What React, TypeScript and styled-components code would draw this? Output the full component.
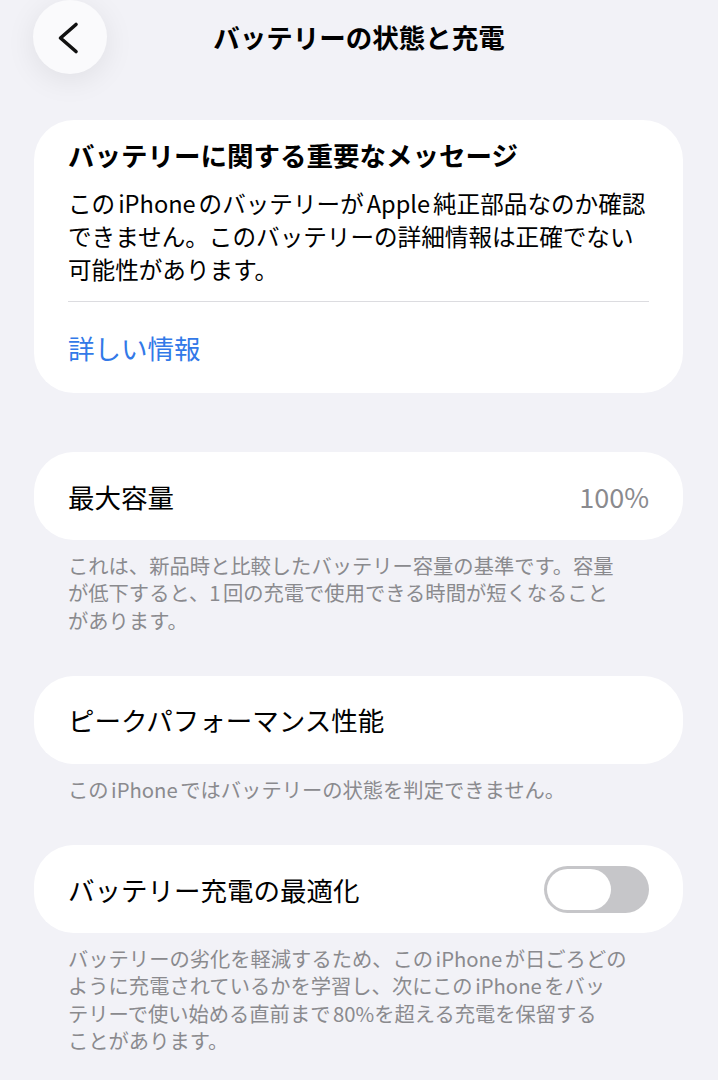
import React from 'react';
import styled, { createGlobalStyle } from 'styled-components';

const GlobalStyle = createGlobalStyle`
	html, body {
		margin: 0;
		padding: 0;
		background: #f2f2f7;
	}
	body {
		font-family: 'Noto Sans CJK JP', 'Noto Sans', sans-serif;
		-webkit-font-smoothing: antialiased;
		text-autospace: normal;
	}
`;

const Page = styled.div`
	min-height: 100vh;
	background: #f2f2f7;
	padding-bottom: 30px;
`;

const Header = styled.header`
	display: grid;
	grid-template-columns: 1fr auto 1fr;
	align-items: center;
	height: 74px;
`;

const BackButton = styled.button`
	width: 74px;
	height: 74px;
	margin-left: 33px;
	border: none;
	border-radius: 50%;
	background: #fafafc;
	box-shadow: 0 6px 30px rgba(0, 0, 0, 0.08);
	display: flex;
	align-items: center;
	justify-content: center;
	padding: 0;
	cursor: pointer;
`;

const Title = styled.h1`
	margin: 0;
	font-size: 26.5px;
	font-weight: 700;
	color: #000;
	line-height: 34px;
`;

const Content = styled.main`
	padding: 0 35px 0 34px;
	margin-top: 46px;
`;

const Card = styled.section<{ $gap?: number }>`
	background: #fff;
	border-radius: 40px;
	margin-top: ${(p) => p.$gap ?? 0}px;
`;

const NoticeBody = styled.div`
	padding: 18px 34px 0;
`;

const NoticeHeading = styled.h2`
	margin: 0;
	font-size: 26.5px;
	font-weight: 700;
	line-height: 34px;
	color: #000;
`;

const NoticeText = styled.p`
	margin: 15px 0 15px;
	font-size: 23.6px;
	line-height: 33px;
	color: #000;
	white-space: nowrap;
`;

const Divider = styled.hr`
	margin: 0 34px;
	border: none;
	height: 1px;
	background: #dcdce0;
`;

const LinkRow = styled.a`
	display: flex;
	align-items: center;
	height: 91px;
	padding: 0 34px;
	font-size: 26.5px;
	color: #3279e8;
	text-decoration: none;
`;

const Row = styled.div`
	display: flex;
	align-items: center;
	justify-content: space-between;
	height: 88px;
	padding: 0 34px;
	border-radius: 44px;
	background: #fff;
`;

const RowLabel = styled.span`
	font-size: 26.5px;
	color: #000;
`;

const RowValue = styled.span`
	font-size: 27px;
	color: #8a8a8e;
`;

const Footnote = styled.p`
	margin: 0;
	padding: 12px 34px 0;
	font-size: 20.3px;
	line-height: 27.3px;
	color: #8a8a8e;
	white-space: nowrap;
`;

const Toggle = styled.span<{ $on?: boolean }>`
	display: flex;
	justify-content: ${(p) => (p.$on ? 'flex-end' : 'flex-start')};
	width: 105px;
	height: 47px;
	padding: 3px;
	box-sizing: border-box;
	border-radius: 24px;
	background: ${(p) => (p.$on ? '#34c759' : '#c6c6c9')};
`;

const Knob = styled.span`
	width: 64px;
	height: 41px;
	border-radius: 21px;
	background: #fff;
`;

const Chevron = () => (
	<svg width='74' height='74' viewBox='0 0 74 74'>
		<path
			d='M43 24.5 L27.5 38 L43 51.5'
			fill='none'
			stroke='#111'
			strokeWidth='3.6'
			strokeLinecap='round'
			strokeLinejoin='round'
		/>
	</svg>
);

const App = () => {
	return (
		<Page>
			<GlobalStyle />
			<Header>
				<div>
					<BackButton aria-label='戻る'>
						<Chevron />
					</BackButton>
				</div>
				<Title>バッテリーの状態と充電</Title>
				<div />
			</Header>

			<Content>
				<Card>
					<NoticeBody>
						<NoticeHeading>バッテリーに関する重要なメッセージ</NoticeHeading>
						<NoticeText>
							このiPhoneのバッテリーがApple純正部品なのか確認
							<br />
							できません。このバッテリーの詳細情報は正確でない
							<br />
							可能性があります。
						</NoticeText>
					</NoticeBody>
					<Divider />
					<LinkRow href='#'>詳しい情報</LinkRow>
				</Card>

				<Card $gap={59}>
					<Row>
						<RowLabel>最大容量</RowLabel>
						<RowValue>100%</RowValue>
					</Row>
				</Card>
				<Footnote>
					これは、新品時と比較したバッテリー容量の基準です。容量
					<br />
					が低下すると、1回の充電で使用できる時間が短くなること
					<br />
					があります。
				</Footnote>

				<Card $gap={42}>
					<Row>
						<RowLabel>ピークパフォーマンス性能</RowLabel>
					</Row>
				</Card>
				<Footnote>このiPhoneではバッテリーの状態を判定できません。</Footnote>

				<Card $gap={42}>
					<Row>
						<RowLabel>バッテリー充電の最適化</RowLabel>
						<Toggle>
							<Knob />
						</Toggle>
					</Row>
				</Card>
				<Footnote>
					バッテリーの劣化を軽減するため、このiPhoneが日ごろどの
					<br />
					ように充電されているかを学習し、次にこのiPhoneをバッ
					<br />
					テリーで使い始める直前まで80%を超える充電を保留する
					<br />
					ことがあります。
				</Footnote>
			</Content>
		</Page>
	);
};

export default App;
